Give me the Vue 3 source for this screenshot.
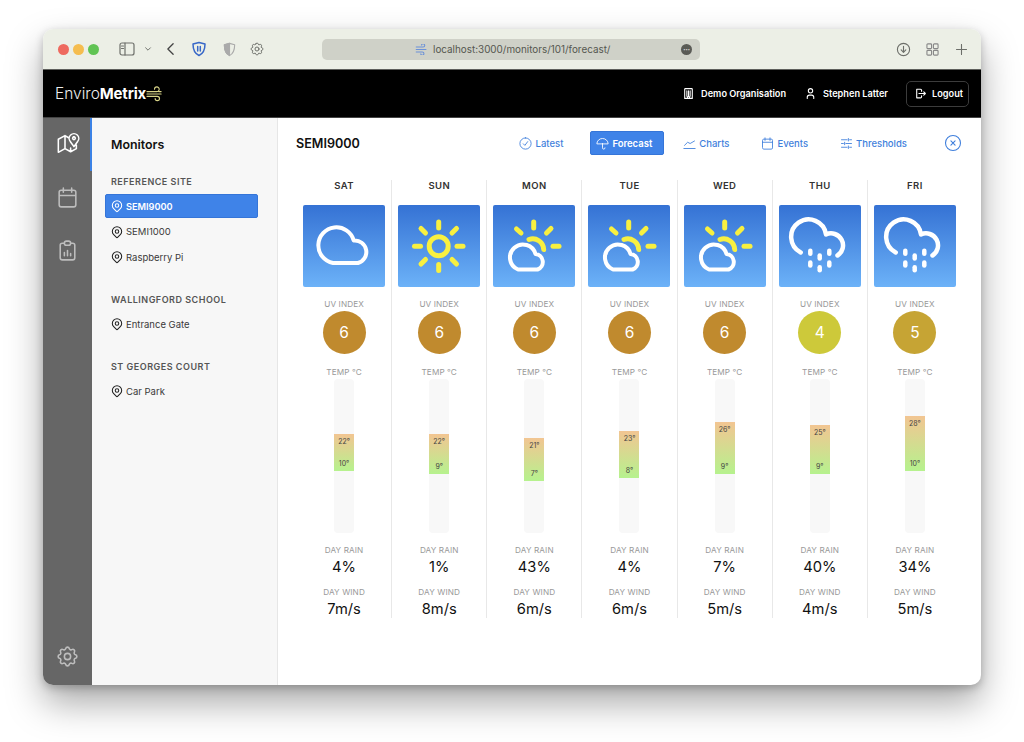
<script setup>
const ICONS = {
  pin: "M17.657 16.657l-4.243 4.243a2 2 0 0 1-2.827 0l-4.244-4.243a8 8 0 1 1 11.314 0z M15 11a3 3 0 1 1-6 0a3 3 0 0 1 6 0z",
  calendar: "M4 7a2 2 0 0 1 2-2h12a2 2 0 0 1 2 2v12a2 2 0 0 1-2 2h-12a2 2 0 0 1-2-2z M16 3v4 M8 3v4 M4 10h16",
  settings: "M10.325 4.317c.426-1.756 2.924-1.756 3.35 0a1.724 1.724 0 0 0 2.573 1.066c1.543-.94 3.31.826 2.37 2.37a1.724 1.724 0 0 0 1.065 2.572c1.756.426 1.756 2.924 0 3.35a1.724 1.724 0 0 0-1.066 2.573c.94 1.543-.826 3.31-2.37 2.37a1.724 1.724 0 0 0-2.572 1.065c-.426 1.756-2.924 1.756-3.35 0a1.724 1.724 0 0 0-2.573-1.066c-1.543.94-3.31-.826-2.37-2.37a1.724 1.724 0 0 0-1.065-2.572c-1.756-.426-1.756-2.924 0-3.35a1.724 1.724 0 0 0 1.066-2.573c-.94-1.543.826-3.31 2.37-2.37c1 .608 2.296.07 2.572-1.065z M15 12a3 3 0 1 1-6 0a3 3 0 0 1 6 0z",
  map: "M13 5.500L9.600 3.500L3.200 7V19.500L9.600 16L15 19L20.500 16V12.500 M9.600 3.500V16 M15 15.500V19 M18.200 14L14.800 9.300A4.600 4.600 0 1 1 21.600 9.300z M18.200 4.700a1.300 1.300 0 1 1-.01 0",
  report: "M9 5H7a2 2 0 0 0-2 2v12a2 2 0 0 0 2 2h10a2 2 0 0 0 2-2V7a2 2 0 0 0-2-2h-2 M9 5a2 2 0 0 1 2-2h2a2 2 0 0 1 2 2a2 2 0 0 1-2 2h-2a2 2 0 0 1-2-2z M9 17v-3 M12 17v-5 M15 17v-2",
  building: "M5 21V4a1 1 0 0 1 1-1h12a1 1 0 0 1 1 1v17z M9 7v10 M12 7v10 M15 7v10 M10 21v-3h4v3",
  user: "M8 7a4 4 0 1 0 8 0a4 4 0 0 0-8 0 M6 21v-2a4 4 0 0 1 4-4h4a4 4 0 0 1 4 4v2",
  logout: "M14 8V6a2 2 0 0 0-2-2H5v16h7a2 2 0 0 0 2-2v-2 M9 12h12 M18 9l3 3-3 3",
  latest: "M12 3a9 9 0 1 1 0 18a9 9 0 0 1 0-18z M8.500 12.500l2.500 2.500 4.500-6",
  umbrella: "M3 12a9 8 0 0 1 18 0z M12 12v7a2 2 0 0 0 4 0",
  charts: "M3 20h18 M4 15l5-5 4 2 7-4",
  sliders: "M4 6h9 M17 6h3 M4 12h3 M11 12h9 M4 18h9 M17 18h3 M15 4v4 M9 10v4 M15 16v4",
  close: "M12 3a9 9 0 1 1 0 18a9 9 0 0 1 0-18z M9.500 9.500l5 5 M14.500 9.500l-5 5",
};

const tabs = [
  { label: "Latest", icon: "latest" },
  { label: "Forecast", icon: "umbrella", active: true },
  { label: "Charts", icon: "charts" },
  { label: "Events", icon: "calendar" },
  { label: "Thresholds", icon: "sliders" },
];

const groups = [
  { name: "REFERENCE SITE", items: ["SEMI9000", "SEMI1000", "Raspberry Pi"] },
  { name: "WALLINGFORD SCHOOL", items: ["Entrance Gate"] },
  { name: "ST GEORGES COURT", items: ["Car Park"] },
];

const days = [
  { day: "SAT", icon: "cloud", uv: 6, hi: 22, lo: 10, rain: 4, wind: 7 },
  { day: "SUN", icon: "sun", uv: 6, hi: 22, lo: 9, rain: 1, wind: 8 },
  { day: "MON", icon: "partly", uv: 6, hi: 21, lo: 7, rain: 43, wind: 6 },
  { day: "TUE", icon: "partly", uv: 6, hi: 23, lo: 8, rain: 4, wind: 6 },
  { day: "WED", icon: "partly", uv: 6, hi: 26, lo: 9, rain: 7, wind: 5 },
  { day: "THU", icon: "rain", uv: 4, hi: 25, lo: 9, rain: 40, wind: 4 },
  { day: "FRI", icon: "rain", uv: 5, hi: 28, lo: 10, rain: 34, wind: 5 },
];

const uvColours = { 4: "#cdc93a", 5: "#c6a434", 6: "#c08a2e" };

// scale runs from 40 at the top of the track to -10 at the bottom
const PX_PER_DEG = 3.08;
function rangeStyle(d) {
  return {
    marginTop: (40 - d.hi) * PX_PER_DEG + "px",
    height: (d.hi - d.lo) * PX_PER_DEG + "px",
  };
}

const sunRays = ["M40.700 17v6", "M40.700 59.500v6", "M16.500 41.300h6", "M59 41.300h6", "M23 23.500l4.500 4.500", "M58.500 23.500l-4.500 4.500", "M23 59l4.500-4.500", "M58.500 59l-4.500-4.500"];
const partlyRays = ["M40.700 17v6", "M23.500 24l4.500 4", "M58 23.500l-4.500 4.500", "M60 41.300h6"];
const drops = [[31.3, 47.3], [50.3, 47.3], [40.7, 52], [31.3, 59], [50.3, 59], [40.7, 63.7]];
</script>

<template>
  <div class="page">
    <div class="window">
      <div class="titlebar">
        <div class="lights"><i class="red"></i><i class="amber"></i><i class="green"></i></div>
        <svg class="chrome-icon side-toggle" viewBox="0 0 16 14"><rect x="1" y="1" width="14" height="12" rx="2" /><path d="M6 1v12" /><path d="M2.500 4h2M2.500 6.500h2" /></svg>
        <svg class="chrome-icon chev" viewBox="0 0 10 10"><path d="M2 3.500l3 3 3-3" /></svg>
        <svg class="chrome-icon back" viewBox="0 0 10 16"><path d="M8 2L2 8l6 6" /></svg>
        <svg class="chrome-icon shield" viewBox="0 0 16 16"><path d="M8 1.500l6 1.500c0 5.500-1.500 9.500-6 11.500C3.500 12.500 2 8.500 2 3z" /><path d="M6.700 5.500v4.500M9.300 5.500v4.500" /></svg>
        <svg class="chrome-icon half" viewBox="0 0 16 16"><path d="M8 1.500l5.500 1.500c0 5.500-1 9.500-5.500 11.500C3.500 12.500 2.500 8.500 2.500 3z" /><path class="half-fill" d="M8 1.500L2.500 3c0 5.500 1 9.500 5.500 11.500z" /></svg>
        <svg class="chrome-icon gear" viewBox="0 0 24 24"><path :d="ICONS.settings" /></svg>
        <div class="urlbar">
          <svg class="url-wind" viewBox="0 0 16 12"><path d="M1 3h9a2 2 0 1 0-2-2M1 6h13M1 9h8a2 2 0 1 1-2 2" /></svg>
          <span>localhost:3000/monitors/101/forecast/</span>
          <span class="url-more">•••</span>
        </div>
        <svg class="chrome-icon download" viewBox="0 0 16 16"><circle cx="8" cy="8" r="6.500" /><path d="M8 4.500v6M5.500 8.500L8 11l2.500-2.500" /></svg>
        <svg class="chrome-icon grid" viewBox="0 0 14 14"><rect x="1" y="1" width="5" height="5" rx="1" /><rect x="8" y="1" width="5" height="5" rx="1" /><rect x="1" y="8" width="5" height="5" rx="1" /><rect x="8" y="8" width="5" height="5" rx="1" /></svg>
        <svg class="chrome-icon plus" viewBox="0 0 12 12"><path d="M6 .5v11M.5 6h11" /></svg>
      </div>

      <header class="appbar">
        <div class="logo">
          <span class="logo-light">Enviro</span><span class="logo-bold">Metrix</span>
          <svg class="logo-wind" viewBox="0 0 18 17"><path d="M1 6.500h10.500a2.500 2.500 0 1 0-2.500-2.500M1 9h15M1 11.500h11a2.300 2.300 0 1 1-2.300 2.300M13.500 6.500h2.500" /></svg>
        </div>
        <div class="org">
          <svg class="icon" viewBox="0 0 24 24"><path :d="ICONS.building" /></svg>
          <span>Demo Organisation</span>
        </div>
        <div class="usr">
          <svg class="icon" viewBox="0 0 24 24"><path :d="ICONS.user" /></svg>
          <span>Stephen Latter</span>
        </div>
        <button class="logout">
          <svg class="icon" viewBox="0 0 24 24"><path :d="ICONS.logout" /></svg>
          <span>Logout</span>
        </button>
      </header>

      <div class="body">
        <nav class="rail">
          <a class="rail-item active"><svg viewBox="0 0 24 24"><path :d="ICONS.map" /></svg></a>
          <a class="rail-item"><svg viewBox="0 0 24 24"><path :d="ICONS.calendar" /></svg></a>
          <a class="rail-item"><svg viewBox="0 0 24 24"><path :d="ICONS.report" /></svg></a>
          <a class="rail-item rail-settings"><svg viewBox="0 0 24 24"><path :d="ICONS.settings" /></svg></a>
        </nav>

        <aside class="panel">
          <h2>Monitors</h2>
          <section v-for="g in groups" :key="g.name" class="group">
            <h3>{{ g.name }}</h3>
            <a v-for="item in g.items" :key="item" :class="['site', { selected: item === 'SEMI9000' }]">
              <svg class="icon" viewBox="0 0 24 24"><path :d="ICONS.pin" /></svg>
              {{ item }}
            </a>
          </section>
        </aside>

        <main class="main">
          <div class="main-head">
            <h1>SEMI9000</h1>
            <div class="tabs">
              <a v-for="t in tabs" :key="t.label" :class="['tab', { on: t.active }]">
                <svg class="icon" viewBox="0 0 24 24"><path :d="ICONS[t.icon]" /></svg>
                {{ t.label }}
              </a>
            </div>
            <svg class="close" viewBox="0 0 24 24"><path :d="ICONS.close" /></svg>
          </div>

          <div class="forecast">
            <div v-for="d in days" :key="d.day" class="col">
              <div class="day">{{ d.day }}</div>
              <div class="tile">
                <svg viewBox="0 0 82 82">
                  <g v-if="d.icon === 'cloud'" class="w-cloud">
                    <path d="M30 58H55A11.500 11.500 0 0 0 50.700 35.500A18 18 0 1 0 30 58z" />
                  </g>
                  <g v-else-if="d.icon === 'sun'" class="w-sun">
                    <circle cx="40.700" cy="41.300" r="9.500" />
                    <path v-for="r in sunRays" :key="r" :d="r" />
                  </g>
                  <g v-else-if="d.icon === 'partly'">
                    <g class="w-sun">
                      <path v-for="r in partlyRays" :key="r" :d="r" />
                      <path d="M36 34.500A11 11 0 0 1 50.700 44.500" />
                    </g>
                    <path class="w-cloud" d="M25 64.500H44.500A8 8 0 0 0 42.500 49A13 13 0 1 0 25 64.500z" />
                  </g>
                  <g v-else class="w-cloud w-rain">
                    <path d="M21.700 47.500A17.500 17.500 0 1 1 47 29.500A12 12 0 0 1 58.500 50.500" />
                    <path v-for="p in drops" :key="p.join()" :d="`M${p[0]} ${p[1] - 1.5}v3`" />
                  </g>
                </svg>
              </div>
              <div class="label uv-label">UV INDEX</div>
              <div class="uv" :style="{ background: uvColours[d.uv] }">{{ d.uv }}</div>
              <div class="label temp-label">TEMP °C</div>
              <div class="track">
                <div class="range" :style="rangeStyle(d)">
                  <span>{{ d.hi }}°</span>
                  <span>{{ d.lo }}°</span>
                </div>
              </div>
              <div class="label rain-label">DAY RAIN</div>
              <div class="value">{{ d.rain }}%</div>
              <div class="label wind-label">DAY WIND</div>
              <div class="value">{{ d.wind }}m/s</div>
            </div>
          </div>
        </main>
      </div>
    </div>
  </div>
</template>

<style>
html,
body {
  margin: 0;
  background: #fff;
}
</style>

<style scoped>
.page {
  box-sizing: border-box;
  width: 1024px;
  height: 742px;
  padding: 29px 43px 0;
  font-family: Inter, "Liberation Sans", sans-serif;
  overflow: hidden;
}

.window {
  display: flex;
  flex-direction: column;
  height: 656px;
  border-radius: 10px;
  overflow: hidden;
  background: #fff;
  box-shadow: 0 18px 36px rgba(0, 0, 0, 0.34), 0 3px 8px rgba(0, 0, 0, 0.22);
}

/* browser chrome */
.titlebar {
  display: flex;
  align-items: center;
  flex: none;
  height: 40px;
  padding-left: 15px;
  background: #ecefe6;
  border-bottom: 1px solid #5e5f5c;
}

.lights {
  display: flex;
  gap: 4px;
}

.lights i {
  width: 11px;
  height: 11px;
  border-radius: 50%;
}

.red { background: #ee6a5f; }
.amber { background: #f5bd4f; }
.green { background: #61c454; }

.chrome-icon {
  flex: none;
  fill: none;
  stroke: #6d6f6a;
  stroke-width: 1.2;
  stroke-linecap: round;
  stroke-linejoin: round;
}

.side-toggle { width: 16px; height: 14px; margin-left: 20px; }
.chev { width: 8px; height: 8px; margin-left: 9px; }
.back { width: 9px; height: 14px; margin-left: 14px; stroke: #444; stroke-width: 1.5; }
.shield { width: 16px; height: 16px; margin-left: 16px; stroke: #3868c8; stroke-width: 1.5; }
.half { width: 15px; height: 15px; margin-left: 15px; stroke: #aaa; }
.half-fill { fill: #aaa; }
.gear { width: 16px; height: 16px; margin-left: 12px; stroke-width: 1.5; }
.download { width: 15px; height: 15px; margin-left: 196px; }
.grid { width: 13px; height: 13px; margin-left: 15px; stroke: #888; }
.plus { width: 11px; height: 11px; margin-left: 17px; }

.urlbar {
  display: flex;
  align-items: center;
  flex: none;
  box-sizing: border-box;
  width: 378px;
  height: 21px;
  margin-left: 57px;
  padding: 0 8px 0 93px;
  border-radius: 5px;
  background: #cfd1c8;
  font-size: 9.9px;
  color: #55574f;
}

.url-wind {
  width: 13px;
  height: 11px;
  margin-right: 5px;
  fill: none;
  stroke: #6c92d8;
  stroke-width: 1.3;
}

.url-more {
  width: 11px;
  height: 11px;
  margin-left: auto;
  border-radius: 50%;
  background: #5a5b56;
  color: #ddd;
  font-size: 4px;
  line-height: 11px;
  text-align: center;
}

/* app bar */
.appbar {
  display: flex;
  align-items: center;
  flex: none;
  height: 48px;
  padding: 0 12px;
  background: #000;
  border-bottom: 1px solid #444;
  box-sizing: border-box;
  color: #fff;
  font-size: 9.2px;
  font-weight: 600;
}

.logo {
  display: flex;
  align-items: center;
  margin-right: auto;
  font-size: 15.5px;
}

.logo-light { font-weight: 300; color: #eee; }
.logo-bold { font-size: 15px; font-weight: 700; letter-spacing: -0.2px; }

.logo-wind {
  width: 17px;
  height: 17px;
  fill: none;
  stroke: #d8d488;
  stroke-width: 1.2;
  stroke-linecap: round;
}

.icon {
  flex: none;
  width: 13px;
  height: 13px;
  fill: none;
  stroke: currentColor;
  stroke-width: 2;
  stroke-linecap: round;
  stroke-linejoin: round;
}

.org,
.usr {
  display: flex;
  align-items: center;
  gap: 6px;
}

.usr {
  margin-left: 18px;
}

.logout {
  display: flex;
  align-items: center;
  gap: 5px;
  box-sizing: border-box;
  width: 63px;
  height: 26px;
  margin-left: 18px;
  padding: 0 0 0 7px;
  border: 1px solid #3c3c3c;
  border-radius: 5px;
  background: #000;
  color: #fff;
  font: inherit;
}

/* left rail */
.body {
  display: flex;
  flex: 1;
  min-height: 0;
}

.rail {
  display: flex;
  flex-direction: column;
  flex: none;
  width: 49px;
  background: #666;
}

.rail-item {
  display: flex;
  align-items: center;
  justify-content: center;
  box-sizing: border-box;
  height: 53px;
  color: #bdbdbd;
}

.rail-item svg {
  width: 25px;
  height: 25px;
  fill: none;
  stroke: currentColor;
  stroke-width: 1.5;
  stroke-linecap: round;
  stroke-linejoin: round;
}

.rail-item.active {
  color: #fff;
  border-right: 2px solid #3b82e6;
  padding-left: 2px;
}

.rail-settings {
  margin-top: auto;
  margin-bottom: 2px;
}

/* monitors panel */
.panel {
  flex: none;
  box-sizing: border-box;
  width: 186px;
  padding: 0 19px 0 13px;
  background: #f7f7f7;
  border-right: 1px solid #e6e6e6;
}

.panel h2 {
  margin: 19px 0 24px 6px;
  font-size: 12.4px;
  line-height: 15px;
  font-weight: 600;
  color: #111;
}

.group {
  margin-bottom: 23.6px;
}

.group h3 {
  margin: 0 0 6px 6px;
  font-size: 9px;
  line-height: 12px;
  font-weight: 600;
  letter-spacing: 0.5px;
  color: #555;
}

.site {
  display: flex;
  align-items: center;
  gap: 2px;
  height: 25.5px;
  padding-left: 5px;
  font-size: 9.5px;
  color: #3a3a3a;
}

.site .icon {
  width: 14px;
  height: 14px;
  stroke-width: 1.8;
  color: #222;
}

.site.selected {
  height: 24px;
  margin-bottom: 1px;
  padding-left: 4px;
  border: 1px solid #3575d8;
  box-sizing: border-box;
  border-radius: 2px;
  background: #3f83e8;
  color: #fff;
  font-size: 9.2px;
  font-weight: 600;
}

.site.selected .icon {
  color: #fff;
}

/* forecast */
.main {
  flex: 1;
  min-width: 0;
  padding: 0 18px;
}

.main-head {
  display: flex;
  align-items: center;
  height: 50px;
  margin-bottom: 12px;
}

.main-head h1 {
  margin: 0;
  font-size: 12.6px;
  font-weight: 600;
  color: #111;
}

.tabs {
  display: flex;
  align-items: center;
  gap: 12.5px;
  margin-left: auto;
}

.tab {
  display: flex;
  align-items: center;
  gap: 2.5px;
  height: 24px;
  padding: 0 9px;
  border-radius: 2px;
  font-size: 9.5px;
  font-weight: 500;
  color: #3f7fdc;
}

.tab .icon {
  width: 15px;
  height: 15px;
  stroke-width: 1.4;
}

.tab.on {
  margin: 0 -4px 0 5px;
  padding: 0 11px 0 4px;
  background: #3f83e8;
  border: 1px solid #3575d8;
  box-sizing: border-box;
  color: #fff;
  font-weight: 600;
}

.close {
  flex: none;
  width: 20px;
  height: 20px;
  margin-left: 27px;
  fill: none;
  stroke: #3f7fdc;
  stroke-width: 1.3;
  stroke-linecap: round;
}

.forecast {
  display: grid;
  grid-template-columns: repeat(7, 1fr);
  margin-right: 1px;
}

.col {
  display: flex;
  flex-direction: column;
  align-items: center;
  border-left: 1px solid #e8e8e8;
}

.col:first-child {
  border-left-color: transparent;
}

.day {
  font-size: 9.5px;
  line-height: 12px;
  font-weight: 600;
  letter-spacing: 0.4px;
  color: #333;
}

.tile {
  box-sizing: border-box;
  width: 82px;
  height: 82px;
  margin-top: 13px;
  border-radius: 2px;
  background: linear-gradient(#3572d4, #6cb2f8);
}

.tile svg {
  display: block;
  width: 82px;
  height: 82px;
  fill: none;
  stroke-linecap: round;
  stroke-linejoin: round;
}

.w-cloud {
  stroke: #fff;
  stroke-width: 4;
}

.w-rain {
  stroke-width: 4.5;
}

.w-sun {
  stroke: #f8f040;
  stroke-width: 5;
}

.label {
  font-size: 8.2px;
  line-height: 12px;
  color: #999;
  letter-spacing: 0.1px;
}

.uv-label { margin-top: 11px; }
.temp-label { margin-top: 12px; }
.rain-label { margin-top: 11px; }
.wind-label { margin-top: 10px; }

.uv {
  box-sizing: border-box;
  width: 43px;
  height: 43px;
  margin-top: 1px;
  border-radius: 50%;
  color: #fff;
  font-size: 15.5px;
  line-height: 43px;
  text-align: center;
}

.track {
  display: flex;
  flex-direction: column;
  width: 20px;
  height: 154px;
  margin-top: 1px;
  border-radius: 4px;
  background: #f8f8f8;
}

.range {
  display: flex;
  flex-direction: column;
  justify-content: space-between;
  box-sizing: border-box;
  padding: 3px 0;
  background: linear-gradient(#f2c592, #b6f28e);
  color: #444;
  font-size: 7px;
  line-height: 9px;
  text-align: center;
}

.value {
  margin-top: 2px;
  font-size: 14.7px;
  line-height: 18px;
  color: #111;
}
</style>
